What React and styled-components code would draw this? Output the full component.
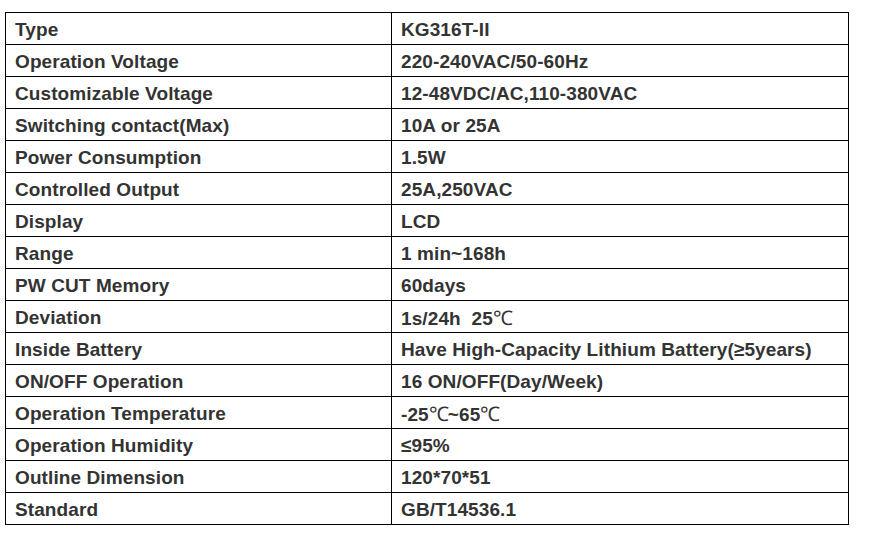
import React from 'react';
import styled, { createGlobalStyle } from 'styled-components';

const GlobalStyle = createGlobalStyle`
  body {
    margin: 0;
    background: #fff;
    font-family: "Liberation Sans", Arial, sans-serif;
  }
`

const Page = styled.div`
  padding: 12px 0 0 5px;
`

const SpecTable = styled.table`
  width: 844px;
  table-layout: fixed;
  border-collapse: collapse;
  border: 1px solid #000;
`

const LabelCol = styled.col`
  width: 386px;
`

const Row = styled.tr`
  height: 32px;
`

const Cell = styled.td`
  border: 1px solid #000;
  padding: 2px 8px 0 9px;
  font-size: 19px;
  font-weight: bold;
  letter-spacing: 0.1px;
  color: #333;
  white-space: nowrap;
  vertical-align: middle;
`

const Celsius = styled.span`
  font-family: "Liberation Serif", "Times New Roman", serif;
  font-weight: normal;
  font-size: 20px;
  letter-spacing: -1px;
`

const specs = [
  ['Type', 'KG316T-II'],
  ['Operation Voltage', '220-240VAC/50-60Hz'],
  ['Customizable Voltage', '12-48VDC/AC,110-380VAC'],
  ['Switching contact(Max)', '10A or 25A'],
  ['Power Consumption', '1.5W'],
  ['Controlled Output', '25A,250VAC'],
  ['Display', 'LCD'],
  ['Range', '1 min~168h'],
  ['PW CUT Memory', '60days'],
  ['Deviation', <>1s/24h&nbsp; 25<Celsius>℃</Celsius></>],
  ['Inside Battery', 'Have High-Capacity Lithium Battery(≥5years)'],
  ['ON/OFF Operation', '16 ON/OFF(Day/Week)'],
  ['Operation Temperature', <>-25<Celsius>℃</Celsius>~65<Celsius>℃</Celsius></>],
  ['Operation Humidity', '≤95%'],
  ['Outline Dimension', '120*70*51'],
  ['Standard', 'GB/T14536.1'],
]

function App() {
  return (
    <Page>
      <GlobalStyle />
      <SpecTable>
        <colgroup>
          <LabelCol />
          <col />
        </colgroup>
        <tbody>
          {specs.map(([label, value], i) => (
            <Row key={i}>
              <Cell>{label}</Cell>
              <Cell>{value}</Cell>
            </Row>
          ))}
        </tbody>
      </SpecTable>
    </Page>
  );
}

export default App;
